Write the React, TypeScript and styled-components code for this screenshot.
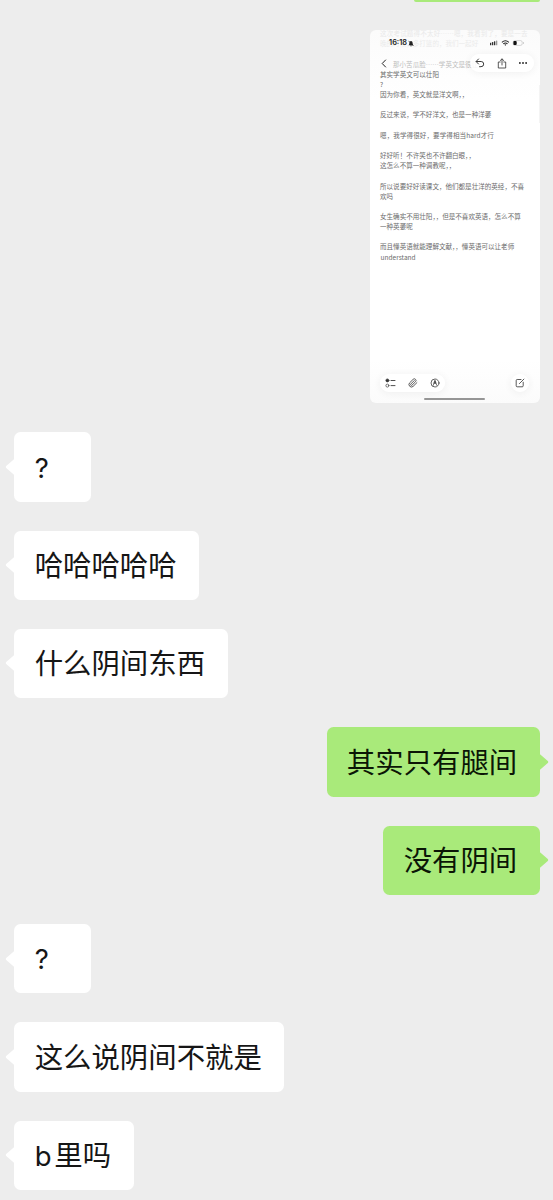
import React from "react";
import styled, { createGlobalStyle } from "styled-components";

const GlobalStyle = createGlobalStyle`
  body { margin: 0; background: #ededed; }
  * { box-sizing: border-box; }
`;

const cjk = `"Noto Sans CJK SC", sans-serif`;

const Chat = styled.main`
  display: flex;
  flex-direction: column;
  gap: 29px;
  width: 553px;
  height: 1200px;
  overflow: hidden;
  padding: 0 13px 0 14px;
  background: #ededed;
  font-family: ${cjk};
`;

const CutBubble = styled.div`
  flex: none;
  align-self: flex-end;
  width: 126px;
  height: 2px;
  margin-bottom: -0.8px;
  border-radius: 0 0 6px 6px;
  background: #a9ea7a;
`;

const Row = styled.div<{ $mine?: boolean }>`
  display: flex;
  flex: none;
  justify-content: ${(p) => (p.$mine ? "flex-end" : "flex-start")};
`;

const Bubble = styled.div<{ $mine?: boolean }>`
  position: relative;
  display: flex;
  align-items: center;
  min-width: 76.5px;
  height: 69.35px;
  padding: 0 ${(p) => (p.$mine ? 22.8 : 22.6)}px 2.6px ${(p) => (p.$mine ? 20.3 : 20.7)}px;
  border-radius: 6.5px;
  background: ${(p) => (p.$mine ? "#a9ea7a" : "#fff")};
  color: ${(p) => (p.$mine ? "#0b1606" : "#161616")};
  font-size: 28.4px;
  line-height: 40px;
  white-space: nowrap;
`;

const Tail = styled.svg<{ $mine?: boolean }>`
  position: absolute;
  top: 24.5px;
  width: 10px;
  height: 20px;
  fill: ${(p) => (p.$mine ? "#a9ea7a" : "#fff")};
  ${(p) => (p.$mine ? "right: -9px; transform: scaleX(-1);" : "left: -9px;")}
`;

const Latin = styled.span`
  margin-right: 2.8px;
  font-family: Inter, sans-serif;
  font-size: 27.5px;
  line-height: 1;
`;

const Shot = styled.section`
  position: relative;
  flex: none;
  align-self: flex-end;
  width: 170.5px;
  height: 373px;
  margin-bottom: 0.1px;
  border-radius: 6px;
  overflow: hidden;
  background: linear-gradient(#fbfbfb 0, #fefefe 50px, #fff 70px, #fff 330px, #fbfbfb 100%);
`;

const Note = styled.div`
  display: flex;
  flex-direction: column;
  padding: 0 0 0 10.5px;
  margin-top: -2px;
`;

const Line = styled.div<{ $tone?: string; $space?: number; $indent?: number }>`
  height: 10.16px;
  padding-left: ${(p) => p.$indent ?? 0}px;
  font-size: 6.55px;
  line-height: 10.16px;
  letter-spacing: ${(p) => p.$space ?? 0}px;
  white-space: pre;
  color: ${(p) => p.$tone ?? "#6c6c6c"};
`;

const StatusBar = styled.div`
  position: absolute;
  top: 8px;
  left: 19.5px;
  right: 15px;
  display: flex;
  align-items: center;
  justify-content: space-between;
  height: 10px;
`;

const Clock = styled.div`
  display: flex;
  align-items: center;
  gap: 1px;
  color: #222;
  font: 600 7.4px/10px Inter, sans-serif;
`;

const Pill = styled.div<{ $top: number; $left: number; $width: number; $height: number; $pad?: number; $clear?: boolean }>`
  position: absolute;
  top: ${(p) => p.$top}px;
  left: ${(p) => p.$left}px;
  display: flex;
  align-items: center;
  justify-content: ${(p) => (p.$pad ? "space-between" : "center")};
  width: ${(p) => p.$width}px;
  height: ${(p) => p.$height}px;
  padding: 0 ${(p) => p.$pad ?? 0}px;
  border-radius: 10px;
  background: rgba(255, 255, 255, ${(p) => (p.$clear ? 0 : 0.85)});
  box-shadow: ${(p) => (p.$clear ? "none" : "0 1px 8px rgba(0, 0, 0, 0.06)")};
`;

const Icon = styled.svg`
  flex: none;
  display: block;
  fill: none;
  stroke: #3c3c3c;
  stroke-width: 1;
  stroke-linecap: round;
  stroke-linejoin: round;
`;

const HomeBar = styled.div`
  position: absolute;
  left: 54.5px;
  bottom: 3px;
  width: 61px;
  height: 2px;
  border-radius: 1px;
  background: #969696;
`;

const ScrollBar = styled.div`
  position: absolute;
  top: 55px;
  right: 0;
  width: 1.5px;
  height: 38px;
  background: #f4f4f4;
`;

type NoteLine = { text: string; tone?: string; space?: number; indent?: number };

const noteLines: NoteLine[] = [
  { text: "这次考试题得不太好……嗯，我看到了，要是一去", tone: "#e9e9e9", space: 0.17 },
  { text: "晚的时候，多打篮的，我们一起好", tone: "#ebebeb" },
  { text: "" },
  { text: "那小苦瓜脸……学英文是很让   ，", tone: "#bdbdbd", indent: 13 },
  { text: "其实学英文可以壮阳" },
  { text: "?" },
  { text: "因为你看，英文就是洋文啊，，" },
  { text: "" },
  { text: "反过来说，学不好洋文，也是一种洋萎" },
  { text: "" },
  { text: "嗯，我学得很好，要学得相当hard才行", space: 0.08 },
  { text: "" },
  { text: "好好听！不许笑也不许翻白眼，，" },
  { text: "这怎么不算一种调教呢，，" },
  { text: "" },
  { text: "所以说要好好读课文，他们都是壮洋的英经，不喜" },
  { text: "欢吗" },
  { text: "" },
  { text: "女生确实不用壮阳，，但是不喜欢英语，怎么不算" },
  { text: "一种英萎呢" },
  { text: "" },
  { text: "而且懂英语就能理解文献，，懂英语可以让老师" },
  { text: "understand", indent: 0.5 },
];

function StatusIcons() {
  return (
    <svg width="36" height="8" viewBox="0 0 36 8">
      <g fill="#333">
        <rect x="1" y="3.7" width="1.3" height="2.6" rx=".4" />
        <rect x="3" y="3" width="1.3" height="3.3" rx=".4" />
        <rect x="5" y="2.2" width="1.3" height="4.1" rx=".4" />
        <rect x="7" y="1.5" width="1.3" height="4.8" rx=".4" opacity=".5" />
      </g>
      <g fill="none" stroke="#222" strokeWidth="1.1">
        <path d="M12.9 3.3Q16.4.3 19.9 3.3" />
        <path d="M14.3 4.9Q16.4 3.1 18.5 4.9" />
      </g>
      <path d="M15.4 5.7Q16.4 4.9 17.4 5.7L16.4 6.8Z" fill="#222" />
      <rect x="24.2" y="1.6" width="9" height="4.8" rx="1.6" fill="none" stroke="#bbb" strokeWidth=".6" />
      <rect x="24.4" y="2" width="3.3" height="4" rx="1" fill="#111" />
      <rect x="34" y="3.2" width=".8" height="1.6" fill="#bbb" />
    </svg>
  );
}

function Screenshot() {
  return (
    <Shot>
      <Note>
        {noteLines.map((l, i) => (
          <Line key={i} $tone={l.tone} $space={l.space} $indent={l.indent}>{l.text}</Line>
        ))}
      </Note>
      <StatusBar>
        <Clock>
          16:18
          <svg width="6" height="7" viewBox="0 0 6 7">
            <path d="M.6 5.2Q1.4 4.4 1.4 2.8Q1.5 1 3 1Q4.5 1 4.6 2.8Q4.6 4.4 5.4 5.2Z" fill="#222" />
            <path d="M2.2 5.8H3.8M.5.8L5.5 6" stroke="#222" strokeWidth=".7" />
          </svg>
        </Clock>
        <StatusIcons />
      </StatusBar>
      <Pill $clear $top={24} $left={5.5} $width={18} $height={19}>
        <Icon width="6" height="9" viewBox="0 0 6 9"><path d="M4.6 1L1.2 4.5L4.6 8" stroke="#222" /></Icon>
      </Pill>
      <Pill $top={24} $left={100} $width={64} $height={18} $pad={5.5}>
        <Icon width="10" height="10" viewBox="0 0 10 10">
          <path d="M3.5 1L1.1 3.5L3.5 6M1.3 3.5H6.2Q8.7 3.6 8.7 6.1Q8.7 8.6 6 8.7H4.5" />
        </Icon>
        <Icon width="10" height="11" viewBox="0 0 10 11">
          <path d="M3.2 4H1.3V10H8.7V4H6.8M5 7V1M3.2 2.6L5 .9L6.8 2.6" strokeWidth=".85" />
        </Icon>
        <Icon width="10" height="4" viewBox="0 0 10 4">
          <g fill="#333" stroke="none"><circle cx="1.9" cy="2" r="1" /><circle cx="5" cy="2" r="1" /><circle cx="8.1" cy="2" r="1" /></g>
        </Icon>
      </Pill>
      <Pill $top={344} $left={10} $width={65} $height={18} $pad={5}>
        <Icon width="11" height="10" viewBox="0 0 11 10">
          <circle cx="2.4" cy="2.4" r="1.5" fill="#333" strokeWidth=".7" />
          <circle cx="2.4" cy="7.6" r="1.5" strokeWidth=".7" />
          <path d="M6 2.5H10M6 7.6H10" strokeWidth=".9" />
        </Icon>
        <Icon width="10" height="10" viewBox="0 0 24 24">
          <path d="m21.4 11.1-9.2 9.1a6 6 0 0 1-8.5-8.4l8.6-8.6a4 4 0 1 1 5.7 5.7l-8.6 8.5a2 2 0 0 1-2.8-2.8l8.5-8.5" strokeWidth="2.3" stroke="#555" />
        </Icon>
        <Icon width="10" height="10" viewBox="0 0 10 10">
          <circle cx="5" cy="5" r="4" strokeWidth=".8" />
          <path d="M3.2 7.4L5 2.5L6.8 7.4" strokeWidth=".7" />
          <path d="M5 2.7L6 5.4H4Z" fill="#333" strokeWidth=".4" />
        </Icon>
      </Pill>
      <Pill $top={344} $left={141} $width={18} $height={18}>
        <Icon width="10" height="10" viewBox="0 0 10 10">
          <path d="M6 1.5H2.2Q1.2 1.5 1.2 2.5V7.8Q1.2 8.8 2.2 8.8H7.2Q8.2 8.8 8.2 7.8V4.2M4.4 5.6L8.9 1.1" strokeWidth=".85" />
        </Icon>
      </Pill>
      <ScrollBar />
      <HomeBar />
    </Shot>
  );
}

function Message({ mine, children }: { mine?: boolean; children: React.ReactNode }) {
  return (
    <Row $mine={mine}>
      <Bubble $mine={mine}>
        <Tail $mine={mine} viewBox="0 0 10 20">
          <path d="M10 1L9 2.2L1.2 9.1Q.3 10 1.2 10.9L9 17.8L10 19Z" />
        </Tail>
        <span>{children}</span>
      </Bubble>
    </Row>
  );
}

export default function App() {
  return (
    <>
      <GlobalStyle />
      <Chat lang="zh-CN">
        <CutBubble />
        <Screenshot />
        <Message><Latin>?</Latin></Message>
        <Message>哈哈哈哈哈</Message>
        <Message>什么阴间东西</Message>
        <Message mine>其实只有腿间</Message>
        <Message mine>没有阴间</Message>
        <Message><Latin>?</Latin></Message>
        <Message>这么说阴间不就是</Message>
        <Message><Latin>b</Latin>里吗</Message>
      </Chat>
    </>
  );
}
